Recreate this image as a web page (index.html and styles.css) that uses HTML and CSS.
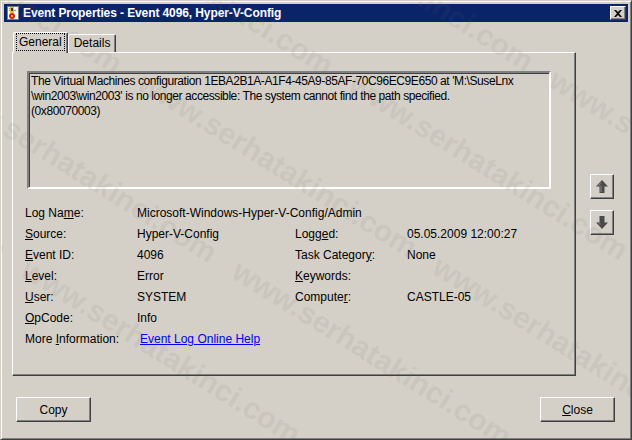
FILE: index.html
```html
<!DOCTYPE html>
<html lang="en">
<head>
  <meta charset="UTF-8">
  <title>Event Properties</title>
  <link rel="stylesheet" href="styles.css">
</head>
<body>

  <div class="window">
    <!-- Barra de titulo -->
    <div class="titlebar">
      <svg class="app-icon" width="16" height="16" viewBox="0 0 16 16">
        <rect x="2.5" y="1.5" width="11" height="13" fill="#fff" stroke="#7a7a7a"/>
        <rect x="4" y="3" width="5" height="1" fill="#9a9a9a"/>
        <rect x="4" y="5" width="7" height="1" fill="#9a9a9a"/>
        <rect x="5" y="2" width="4" height="6" fill="#f0c020"/>
        <rect x="6" y="3" width="2" height="3" fill="#333"/>
        <circle cx="7" cy="11" r="3" fill="#d02020"/>
        <rect x="6" y="10" width="2" height="2" fill="#f0c020"/>
      </svg>
      <span class="title">Event Properties - Event 4096, Hyper-V-Config</span>
      <button class="close-btn">
        <svg width="8" height="7" viewBox="0 0 8 7">
          <path d="M0 0h2l2 2 2-2h2L5 3.5 8 7H6L4 5 2 7H0l3-3.5z" fill="#000"/>
        </svg>
      </button>
    </div>

    <div class="content">
      <div class="main">
        <div class="tabs-area">
          <div class="tabs">
            <div class="tab active"><span class="focus">General</span></div>
            <div class="tab">Details</div>
          </div>

          <div class="panel">
            <div class="description">
              The Virtual Machines configuration 1EBA2B1A-A1F4-45A9-85AF-70C96EC9E650 at 'M:\SuseLnx<br>
              \win2003\win2003' is no longer accessible: The system cannot find the path specified.<br>
              (0x80070003)
            </div>

            <div class="fields">
              <div class="label">Log Na<u>m</u>e:</div>
              <div class="value wide">Microsoft-Windows-Hyper-V-Config/Admin</div>

              <div class="label"><u>S</u>ource:</div>
              <div class="value">Hyper-V-Config</div>
              <div class="label">Logg<u>e</u>d:</div>
              <div class="value">05.05.2009 12:00:27</div>

              <div class="label"><u>E</u>vent ID:</div>
              <div class="value">4096</div>
              <div class="label">Task Categor<u>y</u>:</div>
              <div class="value">None</div>

              <div class="label"><u>L</u>evel:</div>
              <div class="value">Error</div>
              <div class="label"><u>K</u>eywords:</div>
              <div class="value"></div>

              <div class="label"><u>U</u>ser:</div>
              <div class="value">SYSTEM</div>
              <div class="label">Compute<u>r</u>:</div>
              <div class="value">CASTLE-05</div>

              <div class="label"><u>O</u>pCode:</div>
              <div class="value wide">Info</div>

              <div class="label">More <u>I</u>nformation:</div>
              <div class="value wide"><a href="#" class="link">Event Log Online Help</a></div>
            </div>
          </div>
        </div>

        <!-- Flechas anterior / siguiente -->
        <div class="nav">
          <button class="arrow">
            <svg width="12" height="13" viewBox="0 0 12 13">
              <path d="M6 0L12 6.5H8.5V13h-5V6.5H0z" fill="#4a4a4a"/>
              <path d="M6 1.5L2 5.5h2.5v6.5h1V5.5H3.5z" fill="#8a8a8a"/>
            </svg>
          </button>
          <button class="arrow">
            <svg width="12" height="13" viewBox="0 0 12 13">
              <path d="M6 13L12 6.5H8.5V0h-5v6.5H0z" fill="#4a4a4a"/>
              <path d="M4.5 1v6.5H2.5l1 1h1V1z" fill="#8a8a8a"/>
            </svg>
          </button>
        </div>
      </div>

      <div class="buttons">
        <button class="btn">Copy</button>
        <button class="btn"><u>C</u>lose</button>
      </div>
    </div>

    <!-- Marca de agua -->
    <div class="watermark">
      <div class="wm-row">www.serhatakinci.com &nbsp; www.serhatakinci.com &nbsp; www.serhatakinci.com</div>
      <div class="wm-row">www.serhatakinci.com &nbsp; www.serhatakinci.com &nbsp; www.serhatakinci.com</div>
      <div class="wm-row">www.serhatakinci.com &nbsp; www.serhatakinci.com &nbsp; www.serhatakinci.com</div>
      <div class="wm-row">www.serhatakinci.com &nbsp; www.serhatakinci.com &nbsp; www.serhatakinci.com</div>
      <div class="wm-row">www.serhatakinci.com &nbsp; www.serhatakinci.com &nbsp; www.serhatakinci.com</div>
      <div class="wm-row">www.serhatakinci.com &nbsp; www.serhatakinci.com &nbsp; www.serhatakinci.com</div>
      <div class="wm-row">www.serhatakinci.com &nbsp; www.serhatakinci.com &nbsp; www.serhatakinci.com</div>
    </div>
  </div>

</body>
</html>
```

FILE: styles.css
```css
body {
    margin: 0;
    background: #d4d0c8;
    font-family: "Liberation Sans", Arial, sans-serif;
    font-size: 12px;
    color: #000;
}
.window {
    position: relative;
    width: 632px;
    height: 440px;
    box-sizing: border-box;
    padding: 3px;
    border: 1px solid;
    border-color: #d4d0c8 #404040 #404040 #d4d0c8;
    box-shadow: inset 1px 1px #fff, inset -1px -1px #808080;
    background: #d4d0c8;
    overflow: hidden;
}
.titlebar {
    display: flex;
    align-items: center;
    height: 18px;
    padding: 0 2px 0 1px;
    background: #0a246a;
}
.app-icon {
    flex: none;
    margin-right: 2px;
}
.title {
    flex: 1;
    color: #fff;
    font-weight: bold;
    font-size: 12px;
    letter-spacing: -0.1px;
}
.close-btn {
    width: 16px;
    height: 14px;
    padding: 0;
    display: flex;
    align-items: center;
    justify-content: center;
    background: #d4d0c8;
    border: 1px solid;
    border-color: #fff #404040 #404040 #fff;
    box-shadow: inset -1px -1px #808080;
}
.content {
    padding: 10px 0 0 8px;
}
.main {
    display: flex;
}
.tabs {
    display: flex;
    align-items: flex-end;
    height: 20px;
    padding-left: 1px;
    position: relative;
    z-index: 1;
}
.tab {
    height: 17px;
    line-height: 17px;
    padding: 0 5px;
    border: 1px solid;
    border-bottom: none;
    border-color: #fff #404040 transparent #fff;
    box-shadow: inset -1px 0 #808080;
    border-radius: 2px 2px 0 0;
    background: #d4d0c8;
}
.tab.active {
    height: 20px;
    line-height: 19px;
    padding: 0 3px;
    margin-bottom: -1px;
}
.focus {
    outline: 1px dotted #000;
    padding: 1px 2px;
}
.panel {
    width: 564px;
    height: 324px;
    box-sizing: border-box;
    padding: 18px 0 0 14px;
    border: 1px solid;
    border-color: #fff #404040 #404040 #fff;
    box-shadow: inset -1px -1px #808080;
}
.description {
    width: 524px;
    height: 118px;
    box-sizing: border-box;
    padding: 1px 2px;
    line-height: 15px;
    white-space: nowrap;
    letter-spacing: -0.42px;
    overflow: hidden;
    border: 2px solid;
    border-color: #808080 #fff #fff #808080;
    box-shadow: inset 1px 1px #404040, inset -1px -1px #d4d0c8;
}
.fields {
    display: grid;
    grid-template-columns: 112px 158px 112px 1fr;
    margin: 14px 0 0 -2px;
    line-height: 21px;
}
.value.wide {
    grid-column: span 3;
}
.link {
    color: #0000ee;
    margin-left: 3px;
}
.nav {
    display: flex;
    flex-direction: column;
    gap: 11px;
    padding: 142px 0 0 14px;
}
.arrow {
    width: 24px;
    height: 25px;
    padding: 0;
    display: flex;
    align-items: center;
    justify-content: center;
    background: #d4d0c8;
    border: 1px solid;
    border-color: #fff #404040 #404040 #fff;
    box-shadow: inset -1px -1px #808080;
}
.buttons {
    display: flex;
    justify-content: space-between;
    margin-top: 21px;
    padding: 0 13px 0 4px;
}
.btn {
    width: 75px;
    height: 25px;
    font-family: "Liberation Sans", Arial, sans-serif;
    font-size: 12px;
    color: #000;
    background: #d4d0c8;
    border: 1px solid;
    border-color: #fff #404040 #404040 #fff;
    box-shadow: inset -1px -1px #808080;
}
.watermark {
    position: absolute;
    left: -200px;
    top: -260px;
    width: 1100px;
    transform: rotate(32deg);
    transform-origin: center;
    pointer-events: none;
    color: rgba(110, 105, 100, 0.11);
    font-size: 30px;
    font-weight: bold;
    white-space: nowrap;
}
.wm-row {
    height: 110px;
}
.wm-row:nth-child(even) {
    padding-left: 180px;
}
```
